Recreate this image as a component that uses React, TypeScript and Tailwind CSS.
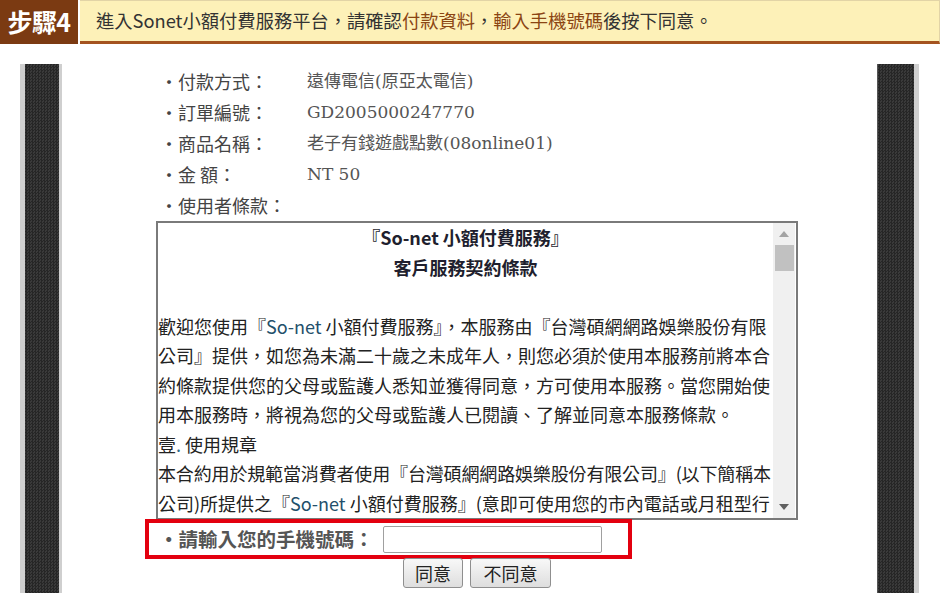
const cjk = "font-['Noto_Sans_CJK_TC','Noto_Sans',sans-serif]"

const rows = [
  { label: '・付款方式：', value: '遠傳電信(原亞太電信)' },
  { label: '・訂單編號：', value: 'GD2005000247770' },
  { label: '・商品名稱：', value: '老子有錢遊戲點數(08online01)' },
  { label: '・金 額：', value: 'NT 50' },
  { label: '・使用者條款：', value: '' },
]

function SoNet() {
  return <span className="text-[#23506b]">So-net</span>
}

/** Side rails with the dark checker texture. */
function Rail({ side }: { side: 'left' | 'right' }) {
  return (
    <div
      className={
        'w-[42px] h-[529px] shrink-0 bg-[#2d2d2d] bg-[repeating-conic-gradient(#262626_0%_25%,#3a3a3a_0%_50%)] bg-[length:3px_3px] ' +
        (side === 'left'
          ? 'border-l-[5px] border-r-[3px] border-[#cfcfcf]'
          : 'border-r-[5px] border-l border-l-[#555] border-r-[#d0d0d0]')
      }
    />
  )
}

export default function App() {
  return (
    <div className={`w-[943px] h-[600px] bg-white overflow-hidden ${cjk}`}>
      {/* step header */}
      <div className="flex h-[44px] gap-[2px]">
        <div className="w-[78px] bg-[#7b3a12] text-white font-bold text-[25px] flex items-center justify-center tracking-tight">
          步驟4
        </div>
        <div className="w-[860px] bg-[#fdf1b8] border-t border-t-[#e2d4a6] border-b-[3px] border-b-[#a4531f] border-r border-r-[#e2d4a6] flex items-center pl-[16px] text-[18.3px] text-[#333] whitespace-nowrap">
          進入Sonet小額付費服務平台，請確認
          <span className="text-[#8b4513]">付款資料</span>，
          <span className="text-[#8b4513]">輸入手機號碼</span>後按下同意。
        </div>
      </div>

      <div className="flex mt-[20px] pl-[20px]">
        <Rail side="left" />

        <div className="w-[815px] pt-[2px]">
          <div className="ml-[98px]">
            {rows.map((r) => (
              <div key={r.label} className="flex h-[31px] items-center text-[18px]">
                <div className="w-[147px] text-[#444] whitespace-nowrap">{r.label}</div>
                <div className="text-[#555] font-['DejaVu_Serif','Noto_Sans_CJK_TC',serif] text-[17px]">
                  {r.value}
                </div>
              </div>
            ))}
          </div>

          {/* terms box */}
          <div className="ml-[94px] w-[642px] h-[299px] border-2 border-[#7a7a7a] flex bg-white">
            <div className="flex-1 overflow-hidden text-[18px] leading-[29.5px] text-[#222] whitespace-nowrap">
              <div className="text-center font-bold text-[#1f1f2e]">『So-net 小額付費服務』</div>
              <div className="text-center font-bold text-[#1f1f2e]">客戶服務契約條款</div>
              <div>&nbsp;</div>
              <div>歡迎您使用『<SoNet /> 小額付費服務』，本服務由『台灣碩網網路娛樂股份有限</div>
              <div>公司』提供，如您為未滿二十歲之未成年人，則您必須於使用本服務前將本合</div>
              <div>約條款提供您的父母或監護人悉知並獲得同意，方可使用本服務。當您開始使</div>
              <div>用本服務時，將視為您的父母或監護人已閱讀、了解並同意本服務條款。</div>
              <div>壹<span className="text-[#2a6a8a]">.</span> 使用規章</div>
              <div className="tracking-[-0.15px]">本合約用於規範當消費者使用『台灣碩網網路娛樂股份有限公司』(以下簡稱本</div>
              <div>公司)所提供之『<SoNet /> 小額付費服務』(意即可使用您的市內電話或月租型行</div>
              <div>之付費方式，以小額支付方式購買產品或服務）</div>
            </div>
            {/* scrollbar */}
            <div className="w-[22px] shrink-0 bg-[#f0f0f0] flex flex-col items-center mr-[1px]">
              <div className="h-[22px] flex items-center justify-center">
                <svg width="10" height="6" viewBox="0 0 10 6">
                  <path d="M0 6 L5 0 L10 6 Z" fill="#a3a3a3" />
                </svg>
              </div>
              <div className="w-[19px] h-[26px] bg-[#c1c1c1]" />
              <div className="flex-1" />
              <div className="h-[22px] flex items-center justify-center">
                <svg width="10" height="6" viewBox="0 0 10 6">
                  <path d="M0 0 L5 6 L10 0 Z" fill="#606060" />
                </svg>
              </div>
            </div>
          </div>

          {/* phone number */}
          <div className="ml-[83px] -mt-[1px] w-[487px] h-[40px] border-[4px] border-[#e3000f] flex items-center pl-[10px]">
            <span className="text-[19.5px] leading-[28px] font-bold text-[#555] whitespace-nowrap">・請輸入您的手機號碼：</span>
            <input
              type="text"
              className="ml-[9px] w-[219px] h-[27px] border border-[#a0a0a0] rounded-[2px] bg-white outline-none"
            />
          </div>

          <div className="ml-[94px] w-[642px] -mt-[1px] flex justify-center gap-[7px]">
            <button className="w-[60px] h-[30px] border border-[#8f8f8f] rounded-[3px] bg-gradient-to-b from-[#f8f8f8] to-[#dedede] text-[18px] text-[#222] leading-none">
              同意
            </button>
            <button className="w-[81px] h-[30px] border border-[#8f8f8f] rounded-[3px] bg-gradient-to-b from-[#f8f8f8] to-[#dedede] text-[18px] text-[#222] leading-none">
              不同意
            </button>
          </div>
        </div>

        <Rail side="right" />
      </div>
    </div>
  )
}
